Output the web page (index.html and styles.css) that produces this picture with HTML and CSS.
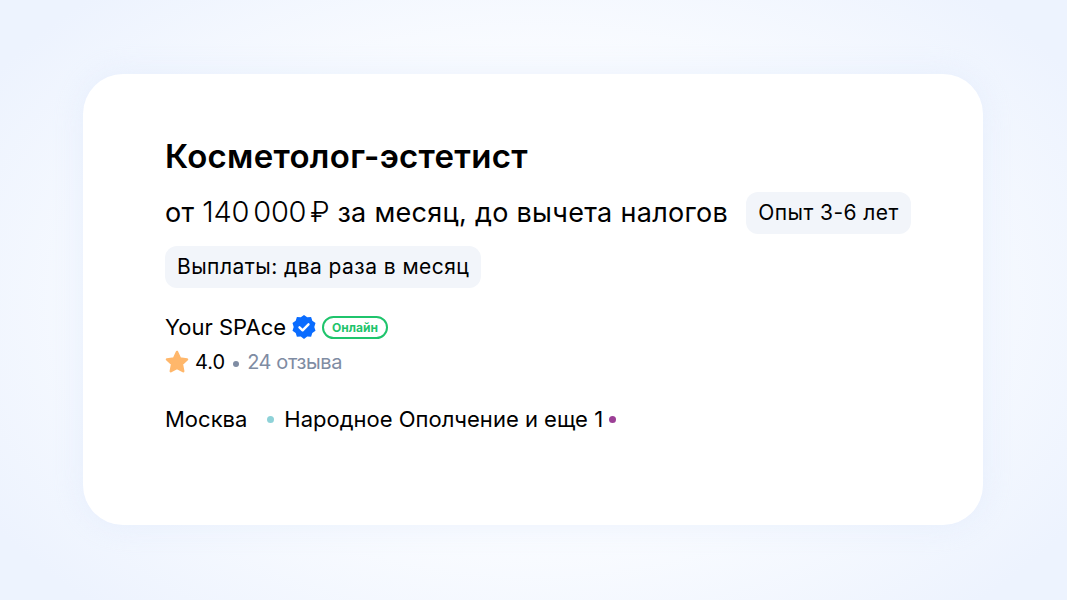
FILE: index.html
```html
<!doctype html>
<html lang="ru">
<head>
    <meta charset="UTF-8">
    <title>Вакансия</title>
    <link rel="stylesheet" href="styles.css">
</head>
<body>
<div class="card">
    <h1 class="title">Косметолог-эстетист</h1>
    <div class="tags">
        <span class="salary">от <span class="sum">140 000 ₽</span> за месяц, до вычета налогов</span>
        <span class="tag">Опыт 3-6 лет</span>
        <span class="tag">Выплаты: два раза в месяц</span>
    </div>
    <div class="company">
        <span class="company-name">Your SPAce</span>
        <svg class="verified" width="26" height="26" viewBox="0 0 26 26">
            <path fill="#0a6cff" d="M13 1l3.200 2.300 3.900-.3 1.200 3.700 3.200 2.300-1.200 4 1.200 3.700-3.200 2.300-1.200 3.700-3.900-.1L13 25l-3.200-2.400-3.900.1-1.200-3.700-3.200-2.300 1.200-3.700-1.200-4 3.200-2.300L5.900 3l3.900.3z"/>
            <path fill="none" stroke="#fff" stroke-width="2.400" stroke-linecap="round" stroke-linejoin="round" d="M8.500 13.300l3.100 3 5.900-6"/>
        </svg>
        <span class="online">Онлайн</span>
    </div>
    <div class="rating">
        <svg class="star" width="26" height="26" viewBox="0 0 26 26">
            <path fill="#ffb76b" stroke="#ffb76b" stroke-width="2.500" stroke-linejoin="round" d="M13 3l3 6.500 7 .9-5.100 4.800 1.300 7L13 18.800l-6.200 3.400 1.300-7L3 10.400l7-.9z"/>
        </svg>
        <span class="rate">4.0</span>
        <span class="sep"></span>
        <span class="reviews">24 отзыва</span>
    </div>
    <div class="address">
        <span class="city">Москва</span>
        <span class="dot dot-teal"></span>
        <span class="metro">Народное Ополчение и еще 1</span>
        <span class="dot dot-purple"></span>
    </div>
</div>
</body>
</html>
```
FILE: styles.css
```css
* {
    margin: 0;
    padding: 0;
    box-sizing: border-box;
}

html {
    width: 100%;
    height: 100%;
}

body {
    width: 100%;
    height: 100%;
    padding: 74px 84px 75px 83px;
    background: radial-gradient(ellipse 640px 420px at 50% 50%, #fafcff 55%, #edf3fe);
    font-family: Inter, "Noto Sans", sans-serif;
    color: #000;
}

.card {
    height: 451px;
    padding: 59px 60px 0 82px;
    background-color: #fff;
    border-radius: 40px;
    box-shadow: 0 0 30px rgba(215, 228, 250, 0.45);
}

.title {
    font-size: 33px;
    line-height: 46px;
    font-weight: 600;
    letter-spacing: 0.3px;
}

.tags {
    display: flex;
    flex-wrap: wrap;
    align-items: center;
    gap: 12px 18px;
    margin-top: 12px;
}

.salary {
    font-size: 27px;
    line-height: 42px;
    letter-spacing: 0.3px;
}

.sum {
    font-size: 29px;
    font-weight: 300;
    letter-spacing: -0.2px;
    word-spacing: -4px;
}

.tag {
    height: 42px;
    padding: 0 12px;
    border-radius: 12px;
    background-color: #f2f5fa;
    font-size: 21px;
    line-height: 41px;
    letter-spacing: 0.45px;
}

.company {
    display: flex;
    align-items: center;
    height: 26px;
    margin-top: 26px;
}

.company-name {
    font-size: 22px;
    line-height: 24px;
}

.verified {
    margin-left: 5px;
}

.online {
    height: 23px;
    margin-left: 5px;
    padding: 0 8px;
    border: 2px solid #1fc46c;
    border-radius: 12px;
    color: #1fc46c;
    font-size: 12px;
    line-height: 19px;
    font-weight: 700;
}

.rating {
    display: flex;
    align-items: center;
    height: 26px;
    margin-top: 9px;
    font-size: 20px;
    line-height: 24px;
}

.star {
    margin-left: -1px;
}

.rate {
    margin-left: 5px;
}

.sep {
    width: 6px;
    height: 6px;
    margin: 3px 8px 0;
    border-radius: 50%;
    background-color: #7f8ca3;
}

.reviews {
    color: #7f8ca3;
    letter-spacing: -0.4px;
}

.address {
    display: flex;
    align-items: center;
    height: 30px;
    margin-top: 29px;
    font-size: 22px;
    line-height: 28px;
}

.city {
    margin-right: 20px;
}

.dot {
    width: 7px;
    height: 7px;
    border-radius: 50%;
}

.dot-teal {
    margin-right: 10px;
    background-color: #8ed2d8;
}

.dot-purple {
    margin-left: 6px;
    background-color: #9c3f96;
}
```
